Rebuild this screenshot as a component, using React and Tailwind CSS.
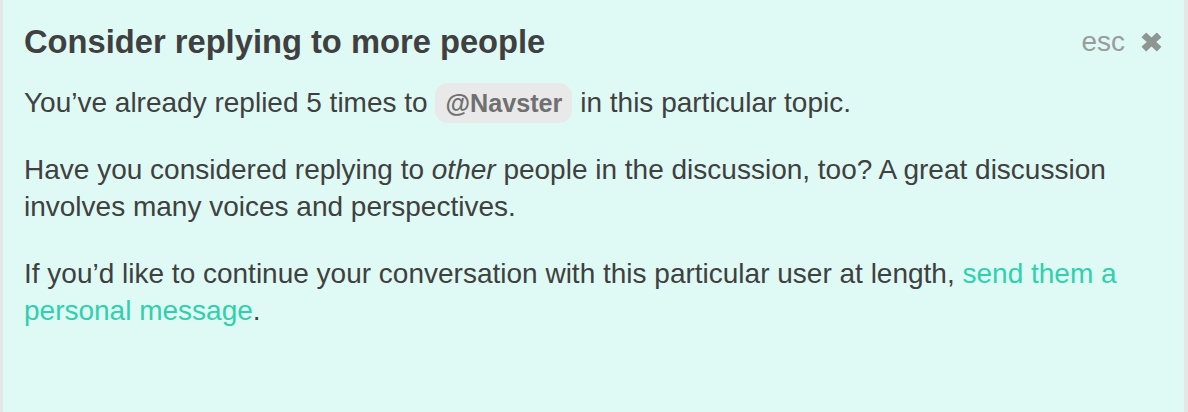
import React from "react";

function CloseIcon() {
  return (
    <svg width="23" height="22" viewBox="0 0 23 22" className="text-[#8e9692]">
      <path
        d="M2.5 6.2 6.2 2.5 11.5 7.6 16.8 2.5 20.5 6.2 15.2 11 20.5 15.8 16.8 19.5 11.5 14.4 6.2 19.5 2.5 15.8 7.8 11Z"
        fill="currentColor"
        stroke="currentColor"
        strokeWidth="1.5"
        strokeLinejoin="round"
      />
    </svg>
  );
}

export default function App() {
  return (
    <div className="w-[1188px] h-[412px] bg-[#dffaf4] border-l-[3px] border-r-[4px] border-[#e6e6e6] font-['Liberation_Sans',Arial,sans-serif] text-[#404040]">
      <div className="pl-[21px] pr-[21px] pt-[22px]">
        <div className="flex items-start justify-between">
          <h1 className="text-[32.7px] font-bold leading-[40px]">Consider replying to more people</h1>
          <div className="flex items-center gap-[15px] pt-[5px]">
            <span className="text-[28px] leading-[30px] text-[#979d9a]">esc</span>
            <CloseIcon />
          </div>
        </div>
        <div className="text-[28px] leading-[37px] mt-[22px]">
          <p>
            You’ve already replied 5 times to{" "}
            <span className="rounded-[13px] bg-[#e9e9e9] px-[10px] py-[6px] text-[25.2px] font-bold text-[#707070]">
              @Navster
            </span>{" "}
            in this particular topic.
          </p>
          <p className="mt-[29px]">
            Have you considered replying to <em>other</em> people in the discussion, too? A great discussion involves many voices and perspectives.
          </p>
          <p className="mt-[30px]">
            If you’d like to continue your conversation with this particular user at length,{" "}
            <a className="text-[#30d0ae]">send them a personal message</a>.
          </p>
        </div>
      </div>
    </div>
  );
}
